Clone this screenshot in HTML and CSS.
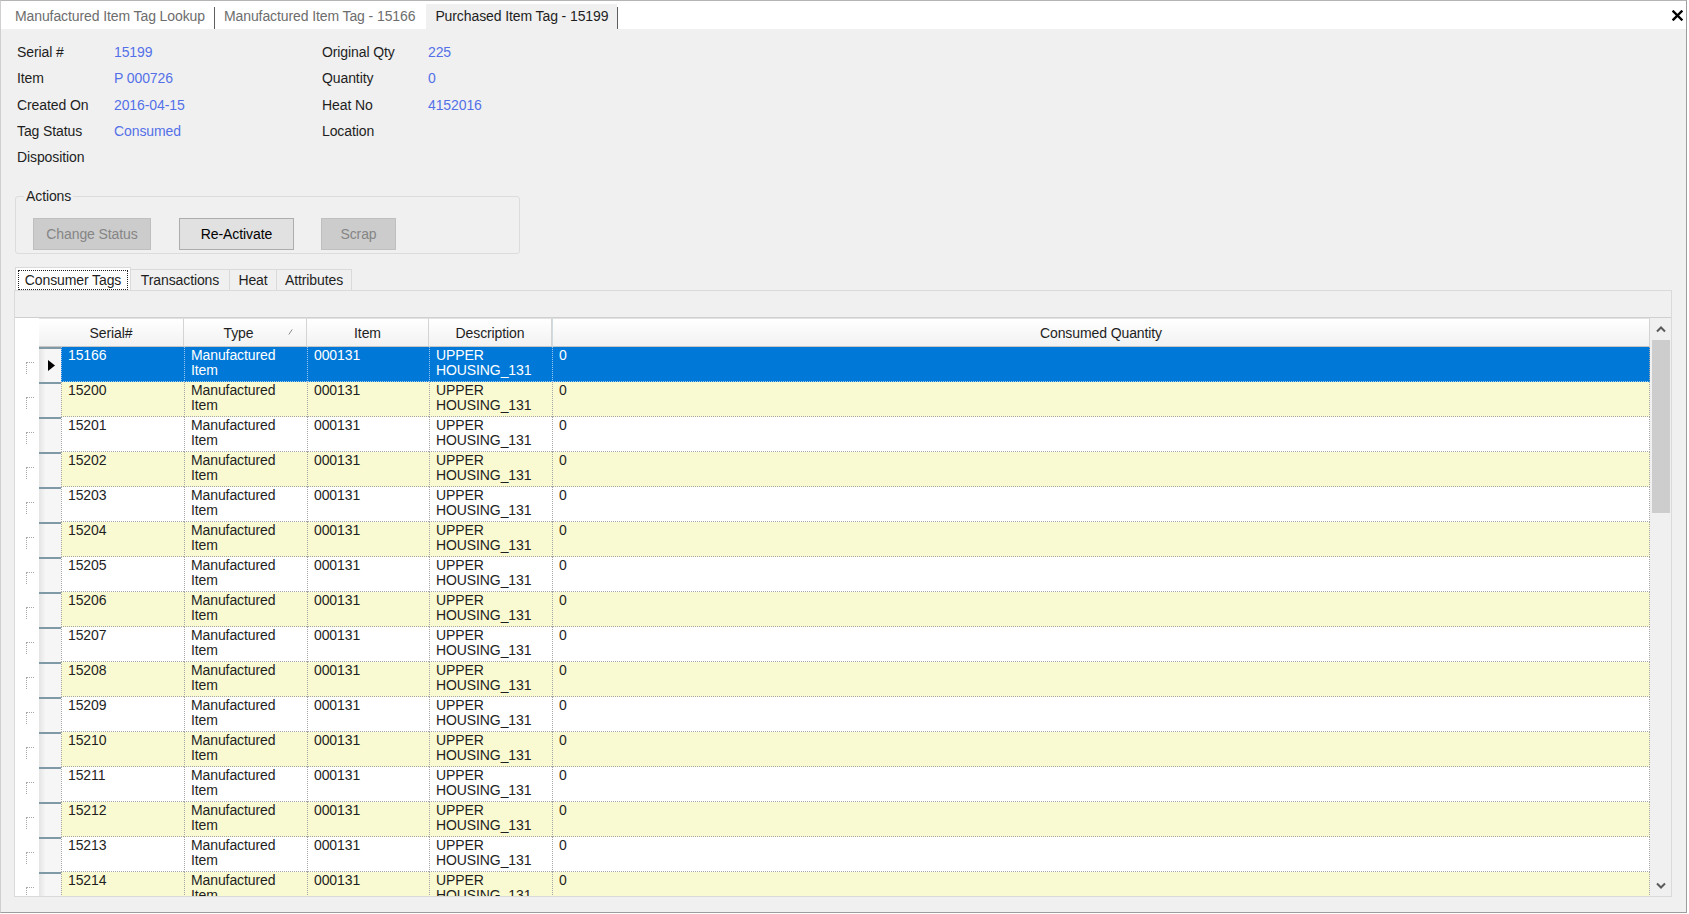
FILE: index.html
```html
<!DOCTYPE html>
<html>
<head>
<meta charset="utf-8">
<link rel="stylesheet" href="styles.css">
</head>
<body>
<div class="window">
  <div class="doc-strip">
    <div class="doc-tab">Manufactured Item Tag Lookup</div>
    <div class="doc-sep"></div>
    <div class="doc-tab">Manufactured Item Tag - 15166</div>
    <div class="doc-tab active">Purchased Item Tag - 15199</div>
    <div class="doc-sep"></div>
    <div class="close-btn"><svg width="11" height="11" viewBox="0 0 11 11"><path d="M1.5 1.5 L9.5 9.5 M9.5 1.5 L1.5 9.5" stroke="#000" stroke-width="2.4" stroke-linecap="square"/></svg></div>
  </div>

  <div class="info">
    <div class="lbl">Serial #</div><div class="val">15199</div><div class="lbl">Original Qty</div><div class="val">225</div>
    <div class="lbl">Item</div><div class="val">P 000726</div><div class="lbl">Quantity</div><div class="val">0</div>
    <div class="lbl">Created On</div><div class="val">2016-04-15</div><div class="lbl">Heat No</div><div class="val">4152016</div>
    <div class="lbl">Tag Status</div><div class="val">Consumed</div><div class="lbl">Location</div><div class="val"></div>
    <div class="lbl">Disposition</div><div class="val"></div><div class="lbl"></div><div class="val"></div>
  </div>

  <fieldset class="actions">
    <legend>Actions</legend>
    <button class="btn disabled b-change">Change Status</button>
    <button class="btn b-react">Re-Activate</button>
    <button class="btn disabled b-scrap">Scrap</button>
  </fieldset>

  <div class="itabs">
    <div class="itab active t-consumer"><span class="focus">Consumer Tags</span></div>
    <div class="itab t-trans">Transactions</div>
    <div class="itab t-heat">Heat</div>
    <div class="itab t-attr">Attributes</div>
  </div>

  <div class="tabpage">
    <div class="band"></div>
    <div class="grid">
      <div class="gbody">
        <div class="hrow">
          <div class="hcorner"></div>
          <div class="hcell h-serial">Serial#</div>
          <div class="hcell h-type">Type<svg class="sort" width="5" height="6" viewBox="0 0 5 6"><path d="M0.8 5.5 L4.2 0.5" stroke="#8a8a8a" stroke-width="1"/></svg></div>
          <div class="hcell h-item">Item</div>
          <div class="hcell h-desc">Description</div>
          <div class="hcell h-qty">Consumed Quantity</div>
        </div>

        <div class="row sel">
          <div class="tree"><span class="stub"></span></div>
          <div class="rh"><svg width="7" height="11" viewBox="0 0 7 11"><path d="M0 0 L7 5.5 L0 11 Z" fill="#000"/></svg></div>
          <div class="c w-serial">15166</div><div class="c w-type">Manufactured<br>Item</div><div class="c w-item">000131</div><div class="c w-desc">UPPER<br>HOUSING_131</div><div class="c w-qty">0</div>
        </div>
        <div class="row alt">
          <div class="tree"><span class="stub"></span></div><div class="rh"></div>
          <div class="c w-serial">15200</div><div class="c w-type">Manufactured<br>Item</div><div class="c w-item">000131</div><div class="c w-desc">UPPER<br>HOUSING_131</div><div class="c w-qty">0</div>
        </div>
        <div class="row">
          <div class="tree"><span class="stub"></span></div><div class="rh"></div>
          <div class="c w-serial">15201</div><div class="c w-type">Manufactured<br>Item</div><div class="c w-item">000131</div><div class="c w-desc">UPPER<br>HOUSING_131</div><div class="c w-qty">0</div>
        </div>
        <div class="row alt">
          <div class="tree"><span class="stub"></span></div><div class="rh"></div>
          <div class="c w-serial">15202</div><div class="c w-type">Manufactured<br>Item</div><div class="c w-item">000131</div><div class="c w-desc">UPPER<br>HOUSING_131</div><div class="c w-qty">0</div>
        </div>
        <div class="row">
          <div class="tree"><span class="stub"></span></div><div class="rh"></div>
          <div class="c w-serial">15203</div><div class="c w-type">Manufactured<br>Item</div><div class="c w-item">000131</div><div class="c w-desc">UPPER<br>HOUSING_131</div><div class="c w-qty">0</div>
        </div>
        <div class="row alt">
          <div class="tree"><span class="stub"></span></div><div class="rh"></div>
          <div class="c w-serial">15204</div><div class="c w-type">Manufactured<br>Item</div><div class="c w-item">000131</div><div class="c w-desc">UPPER<br>HOUSING_131</div><div class="c w-qty">0</div>
        </div>
        <div class="row">
          <div class="tree"><span class="stub"></span></div><div class="rh"></div>
          <div class="c w-serial">15205</div><div class="c w-type">Manufactured<br>Item</div><div class="c w-item">000131</div><div class="c w-desc">UPPER<br>HOUSING_131</div><div class="c w-qty">0</div>
        </div>
        <div class="row alt">
          <div class="tree"><span class="stub"></span></div><div class="rh"></div>
          <div class="c w-serial">15206</div><div class="c w-type">Manufactured<br>Item</div><div class="c w-item">000131</div><div class="c w-desc">UPPER<br>HOUSING_131</div><div class="c w-qty">0</div>
        </div>
        <div class="row">
          <div class="tree"><span class="stub"></span></div><div class="rh"></div>
          <div class="c w-serial">15207</div><div class="c w-type">Manufactured<br>Item</div><div class="c w-item">000131</div><div class="c w-desc">UPPER<br>HOUSING_131</div><div class="c w-qty">0</div>
        </div>
        <div class="row alt">
          <div class="tree"><span class="stub"></span></div><div class="rh"></div>
          <div class="c w-serial">15208</div><div class="c w-type">Manufactured<br>Item</div><div class="c w-item">000131</div><div class="c w-desc">UPPER<br>HOUSING_131</div><div class="c w-qty">0</div>
        </div>
        <div class="row">
          <div class="tree"><span class="stub"></span></div><div class="rh"></div>
          <div class="c w-serial">15209</div><div class="c w-type">Manufactured<br>Item</div><div class="c w-item">000131</div><div class="c w-desc">UPPER<br>HOUSING_131</div><div class="c w-qty">0</div>
        </div>
        <div class="row alt">
          <div class="tree"><span class="stub"></span></div><div class="rh"></div>
          <div class="c w-serial">15210</div><div class="c w-type">Manufactured<br>Item</div><div class="c w-item">000131</div><div class="c w-desc">UPPER<br>HOUSING_131</div><div class="c w-qty">0</div>
        </div>
        <div class="row">
          <div class="tree"><span class="stub"></span></div><div class="rh"></div>
          <div class="c w-serial">15211</div><div class="c w-type">Manufactured<br>Item</div><div class="c w-item">000131</div><div class="c w-desc">UPPER<br>HOUSING_131</div><div class="c w-qty">0</div>
        </div>
        <div class="row alt">
          <div class="tree"><span class="stub"></span></div><div class="rh"></div>
          <div class="c w-serial">15212</div><div class="c w-type">Manufactured<br>Item</div><div class="c w-item">000131</div><div class="c w-desc">UPPER<br>HOUSING_131</div><div class="c w-qty">0</div>
        </div>
        <div class="row">
          <div class="tree"><span class="stub"></span></div><div class="rh"></div>
          <div class="c w-serial">15213</div><div class="c w-type">Manufactured<br>Item</div><div class="c w-item">000131</div><div class="c w-desc">UPPER<br>HOUSING_131</div><div class="c w-qty">0</div>
        </div>
        <div class="row alt">
          <div class="tree"><span class="stub"></span></div><div class="rh"></div>
          <div class="c w-serial">15214</div><div class="c w-type">Manufactured<br>Item</div><div class="c w-item">000131</div><div class="c w-desc">UPPER<br>HOUSING_131</div><div class="c w-qty">0</div>
        </div>
      </div>
      <div class="vscroll">
        <div class="sb-btn"><svg width="10" height="7" viewBox="0 0 10 7"><path d="M1 5.5 L5 1.5 L9 5.5" fill="none" stroke="#5a5a5a" stroke-width="2"/></svg></div>
        <div class="sb-track"><div class="thumb"></div></div>
        <div class="sb-btn"><svg width="10" height="7" viewBox="0 0 10 7"><path d="M1 1.5 L5 5.5 L9 1.5" fill="none" stroke="#5a5a5a" stroke-width="2"/></svg></div>
      </div>
    </div>
  </div>
</div>
</body>
</html>
```
FILE: styles.css
```css
* { box-sizing: border-box; }
html, body { margin: 0; }
body {
  background: #fff;
  font-family: "Liberation Sans", Arial, sans-serif;
  font-size: 14px;
  letter-spacing: -0.1px;
  color: #1e1e1e;
}
.window {
  width: 1687px;
  height: 913px;
  border-top: 1px solid #b4b4b4;
  border-right: 1px solid #9d9d9d;
  border-bottom: 1px solid #9d9d9d;
  border-left: 1px solid #cfcfcf;
  background: #f0f0f0;
  display: flex;
  flex-direction: column;
  overflow: hidden;
}

/* document tabs strip */
.doc-strip {
  flex-shrink: 0;
  height: 28px;
  background: #fff;
  display: flex;
  align-items: flex-end;
  padding-left: 5px;
}
.doc-tab {
  height: 25px;
  line-height: 25px;
  padding: 0 9px;
  color: #6d6d6d;
  white-space: nowrap;
}
.doc-tab.active {
  margin-left: 2px;
  background: #f0f0f0;
  color: #1e1e1e;
}
.doc-sep {
  width: 1px;
  height: 22px;
  background: #5e5e5e;
}
.close-btn {
  margin-left: auto;
  margin-right: 3px;
  align-self: center;
  width: 11px;
  height: 11px;
  display: flex;
}

/* info fields */
.info {
  flex-shrink: 0;
  display: grid;
  grid-template-columns: 97px 208px 106px 1fr;
  grid-auto-rows: 26.25px;
  align-items: center;
  padding-left: 16px;
  margin-top: 10px;
}
.lbl { color: #1e1e1e; }
.val { color: #5470e8; }

/* actions group */
.actions {
  flex-shrink: 0;
  margin: 18px 0 0 14px;
  width: 505px;
  border: 1px solid #dcdcdc;
  border-radius: 3px;
  padding: 14px 0 3px 17px;
  display: flex;
  min-width: 0;
}
.actions legend {
  margin-left: -9px;
  padding: 0 2px;
  line-height: 16px;
  color: #1e1e1e;
}
.btn {
  height: 32px;
  border: 1px solid #adadad;
  background: #e1e1e1;
  color: #000;
  font-family: inherit;
  font-size: 14px;
  letter-spacing: -0.1px;
  padding: 0;
}
.btn.disabled {
  background: #cccccc;
  border-color: #bfbfbf;
  color: #858585;
}
.b-change { width: 118px; }
.b-react { width: 115px; margin-left: 28px; }
.b-scrap { width: 75px; margin-left: 27px; }

/* inner tabs */
.itabs {
  flex-shrink: 0;
  display: flex;
  align-items: flex-end;
  height: 23px;
  margin: 13px 0 0 14px;
}
.itab {
  height: 21px;
  border: 1px solid #dadada;
  border-bottom: 0;
  text-align: center;
  line-height: 20px;
  background: #f0f0f0;
  color: #1e1e1e;
  white-space: nowrap;
}
.itab + .itab { border-left: 0; }
.itab.active {
  height: 23px;
  background: #fff;
  padding: 2px 2px 0 2px;
}
.focus {
  display: block;
  height: 100%;
  border: 1px dotted #222;
  line-height: 18px;
}
.t-consumer { width: 116px; }
.t-trans { width: 99px; }
.t-heat { width: 47px; }
.t-attr { width: 75px; }

/* tab page */
.tabpage {
  flex-shrink: 0;
  margin-left: 13px;
  width: 1658px;
  height: 607px;
  border: 1px solid #dadada;
  background: #fff;
  display: flex;
  flex-direction: column;
}
.band {
  height: 27px;
  background: #f0f0f0;
  border-bottom: 1px solid #cfcfcf;
}
.grid {
  display: flex;
  height: 578px;
}
.gbody {
  flex: 1;
  overflow: hidden;
  background: #fff;
}

/* header */
.hrow {
  display: flex;
  height: 29px;
}
.hcorner {
  width: 24px;
  background: #fff;
}
.hcell {
  display: flex;
  align-items: center;
  justify-content: center;
  background: linear-gradient(#ffffff, #f2f2f2);
  border-right: 1px solid #d4d4d4;
  border-bottom: 1px solid #c6c6c6;
  border-top: 1px solid #e2e2e2;
  color: #1e1e1e;
  white-space: nowrap;
  position: relative;
}
.h-serial { width: 145px; }
.h-type { width: 123px; padding-right: 13px; }
.h-item { width: 122px; }
.h-desc { width: 123px; }
.h-qty { flex: 1; border-left: 1px solid #cfdbe0; }
.sort {
  position: absolute;
  right: 13px;
  top: 10px;
}

/* rows */
.row {
  display: flex;
  height: 35px;
}
.tree {
  width: 24px;
  background: #fff;
  display: flex;
  align-items: flex-start;
}
.stub {
  margin-left: 11px;
  margin-top: 15px;
  width: 8px;
  height: 12px;
  border-left: 1px dotted #a8a8a8;
  border-top: 1px dotted #a8a8a8;
}
.rh {
  width: 22px;
  background: linear-gradient(to right, #e4e4e4, #f6f6f6 30%, #f6f6f6);
  border-top: 2px solid #7f9aa6;
  display: flex;
  align-items: center;
  justify-content: center;
  padding-left: 2px;
}
.c {
  border-left: 1px dotted #a6a6a6;
  border-bottom: 1px dotted #a6a6a6;
  padding: 1px 6px 0 6px;
  line-height: 15px;
  overflow: hidden;
  white-space: nowrap;
  color: #1e1e1e;
}
.w-serial { width: 123px; }
.w-type { width: 123px; }
.w-item { width: 122px; }
.w-desc { width: 123px; }
.w-qty { flex: 1; border-right: 1px dotted #a6a6a6; }
.row.alt .c { background: #fafad2; }
.row.sel .c {
  background: #0078d7;
  color: #fff;
  border-left-color: #9cc6ee;
  border-bottom-color: #9cc6ee;
}

/* scrollbar */
.vscroll {
  width: 21px;
  background: #f0f0f0;
  display: flex;
  flex-direction: column;
}
.sb-btn {
  height: 22px;
  display: flex;
  align-items: center;
  justify-content: center;
}
.sb-track {
  flex: 1;
  padding: 0 1px 0 2px;
}
.thumb {
  height: 173px;
  background: #cdcdcd;
}
```
